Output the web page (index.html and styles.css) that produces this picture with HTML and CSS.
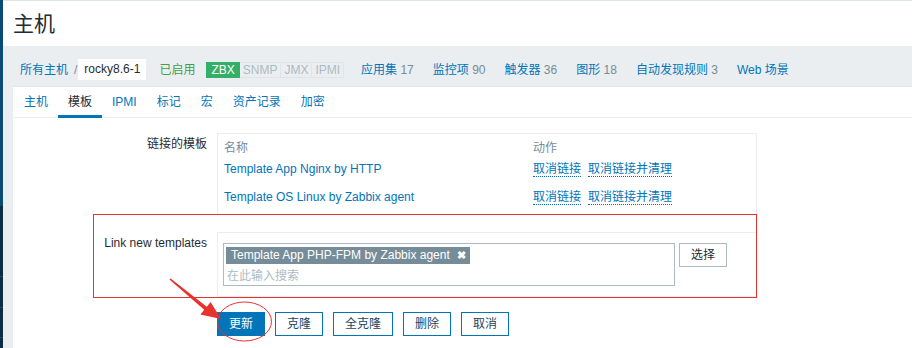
FILE: index.html
```html
<!DOCTYPE html>
<html lang="zh">
<head>
    <meta charset="UTF-8">
    <title>主机</title>
    <link rel="stylesheet" href="styles.css">
</head>
<body>
<div class="layout">
    <aside class="sidebar"></aside>

    <main class="main">
        <header class="page-header">
            <h1>主机</h1>
        </header>

        <nav class="host-nav">
            <a href="#" class="crumb">所有主机</a>
            <span class="sep">/</span>
            <span class="current">rocky8.6-1</span>
            <span class="enabled">已启用</span>
            <span class="status">
                <span class="badge on">ZBX</span><span class="badge">SNMP</span><span class="badge">JMX</span><span class="badge">IPMI</span>
            </span>
            <a href="#" class="nav-item">应用集 <em>17</em></a>
            <a href="#" class="nav-item">监控项 <em>90</em></a>
            <a href="#" class="nav-item">触发器 <em>36</em></a>
            <a href="#" class="nav-item">图形 <em>18</em></a>
            <a href="#" class="nav-item">自动发现规则 <em>3</em></a>
            <a href="#" class="nav-item">Web 场景</a>
        </nav>

        <div class="card">
            <ul class="tabs">
                <li><a href="#">主机</a></li>
                <li class="active"><a href="#">模板</a></li>
                <li><a href="#">IPMI</a></li>
                <li><a href="#">标记</a></li>
                <li><a href="#">宏</a></li>
                <li><a href="#">资产记录</a></li>
                <li><a href="#">加密</a></li>
            </ul>

            <form class="form">
                <div class="form-row">
                    <label class="form-label">链接的模板</label>
                    <div class="field-box">
                        <table class="linked">
                            <tr>
                                <th class="col-name">名称</th>
                                <th>动作</th>
                            </tr>
                            <tr>
                                <td><a href="#">Template App Nginx by HTTP</a></td>
                                <td><a href="#" class="dotted">取消链接</a><a href="#" class="dotted">取消链接并清理</a></td>
                            </tr>
                            <tr>
                                <td><a href="#">Template OS Linux by Zabbix agent</a></td>
                                <td><a href="#" class="dotted">取消链接</a><a href="#" class="dotted">取消链接并清理</a></td>
                            </tr>
                        </table>
                    </div>
                </div>

                <div class="form-row new-row">
                    <label class="form-label">Link new templates</label>
                    <div class="field-box pad">
                        <div class="ms-wrap">
                            <div class="multiselect">
                                <span class="chip">Template App PHP-FPM by Zabbix agent<span class="chip-x">&#10006;</span></span>
                                <input type="text" placeholder="在此输入搜索">
                            </div>
                            <button type="button" class="btn-grey">选择</button>
                        </div>
                    </div>
                </div>

                <div class="form-actions">
                    <button type="button" class="btn primary">更新</button>
                    <button type="button" class="btn">克隆</button>
                    <button type="button" class="btn">全克隆</button>
                    <button type="button" class="btn">删除</button>
                    <button type="button" class="btn">取消</button>
                </div>
            </form>
        </div>
    </main>
</div>

<!-- 截图上的红色标注 -->
<svg class="marks" width="912" height="348" viewBox="0 0 912 348">
    <rect x="93.5" y="214.5" width="663" height="83" fill="none" stroke="#e8322e" stroke-width="1"/>
    <polygon points="169.4,279.6 204.2,309.8 200.4,314.5 221,319 210.6,302.1 206.8,306.8 170.6,278.4" fill="#e8322e"/>
    <ellipse cx="244.5" cy="321.5" rx="27" ry="19.5" fill="none" stroke="#e8322e" stroke-width="1"/>
</svg>
</body>
</html>
```

FILE: styles.css
```css
* {
    box-sizing: border-box;
}

body {
    margin: 0;
    background: #ebeef0;
    color: #1f2c33;
    font: 12px/14px "Liberation Sans", Arial, "Noto Sans CJK SC", sans-serif;
    overflow: hidden;
}

a {
    color: #0275b8;
    text-decoration: none;
}

.layout {
    display: flex;
    height: 348px;
}

/* 左侧菜单只露出一条边 */
.sidebar {
    flex: 0 0 3px;
    background: linear-gradient(#0b4a72 0, #0b4a72 206px, #0e2b41 206px, #0e2b41 276px, #2a465b 276px, #2a465b 277px,
        #0e2b41 277px, #0e2b41 307px, #2a465b 307px, #2a465b 308px, #0e2b41 308px, #0e2b41 337px,
        #2a465b 337px, #2a465b 338px, #0e2b41 338px);
}

.main {
    flex: 1;
    min-width: 0;
    display: flex;
    flex-direction: column;
}

.page-header {
    background: #fff;
    border-top: 1px solid #dfe4e7;
    height: 46px;
    padding-left: 10px;
}

.page-header h1 {
    margin: 0;
    font-weight: normal;
    font-size: 21px;
    line-height: 45px;
}

/* 主机导航条 */
.host-nav {
    height: 40px;
    padding: 13px 0 6px 17px;
    display: flex;
    align-items: center;
    white-space: nowrap;
}

.sep {
    color: #768d99;
    margin: 0 1px 0 6px;
}

.current {
    background: #fff;
    height: 21px;
    line-height: 21px;
    padding: 0 6px;
}

.enabled {
    color: #429e47;
    margin-left: 13px;
}

.status {
    display: flex;
    margin-left: 11px;
}

.badge {
    height: 16px;
    line-height: 14px;
    padding: 0 3px;
    border: 1px solid #dfe4e7;
    border-left: 0;
    color: #acbbc2;
}

.badge.on {
    background: #34af67;
    border: 1px solid #34af67;
    color: #fff;
    padding: 0 4px;
}

.nav-item {
    margin-left: 19px;
}

.status + .nav-item {
    margin-left: 17px;
}

.nav-item em {
    font-style: normal;
    color: #768d99;
}

/* 内容卡片 */
.card {
    flex: 1;
    margin-left: 10px;
    background: #fff;
    border-top: 1px solid #dfe4e7;
}

.tabs {
    display: flex;
    list-style: none;
    margin: 0;
    padding: 0 0 0 1px;
    height: 31px;
    border-bottom: 1px solid #ebeef0;
}

.tabs li a {
    display: block;
    height: 31px;
    line-height: 30px;
    padding: 0 10px;
}

.tabs li.active a {
    color: #1f2c33;
    box-shadow: inset 0 -3px 0 #0275b8;
}

.form {
    padding-top: 15px;
}

.form-row {
    display: flex;
    gap: 10px;
}

.new-row {
    margin-top: 17px;
}

.form-label {
    flex: 0 0 194px;
    text-align: right;
    padding-top: 4px;
}

.field-box {
    width: 540px;
    border: 1px solid #ebeef0;
    padding: 0 6px 3px;
}

.field-box.pad {
    padding: 10px 5px;
}

.linked {
    border-collapse: collapse;
    width: 100%;
}

.linked th {
    text-align: left;
    font-weight: normal;
    color: #768d99;
    padding: 7px 0 0;
}

.linked .col-name {
    width: 309px;
}

.linked td {
    padding: 7px 0;
    white-space: nowrap;
}

.dotted {
    border-bottom: 1px dotted #0275b8;
    margin-right: 7px;
}

.ms-wrap {
    display: flex;
    align-items: flex-start;
    gap: 4px;
}

.multiselect {
    width: 452px;
    border: 1px solid #acbbc2;
    padding: 3px 2px 0;
}

.chip {
    display: inline-block;
    height: 17px;
    line-height: 17px;
    background: #768d99;
    color: #fff;
    padding: 0 4px 0 5px;
    margin-bottom: 2px;
}

.chip-x {
    font-size: 11px;
    font-weight: bold;
    margin-left: 7px;
}

.multiselect input {
    display: block;
    border: 0;
    outline: 0;
    width: 100%;
    height: 19px;
    padding: 0 1px;
    font: inherit;
    color: #1f2c33;
}

.multiselect input::placeholder {
    color: #acbbc2;
}

.btn-grey {
    height: 24px;
    padding: 0 11px;
    background: #fff;
    border: 1px solid #acbbc2;
    color: #1f2c33;
    font: inherit;
}

.form-actions {
    display: flex;
    gap: 10px;
    margin: 15px 0 0 204px;
}

.btn {
    height: 24px;
    padding: 0 11px;
    background: #fff;
    border: 1px solid #0275b8;
    color: #24435c;
    font: inherit;
}

.btn.primary {
    background: #0275b8;
    color: #fff;
}

.marks {
    position: absolute;
    left: 0;
    top: 0;
    pointer-events: none;
}
```
